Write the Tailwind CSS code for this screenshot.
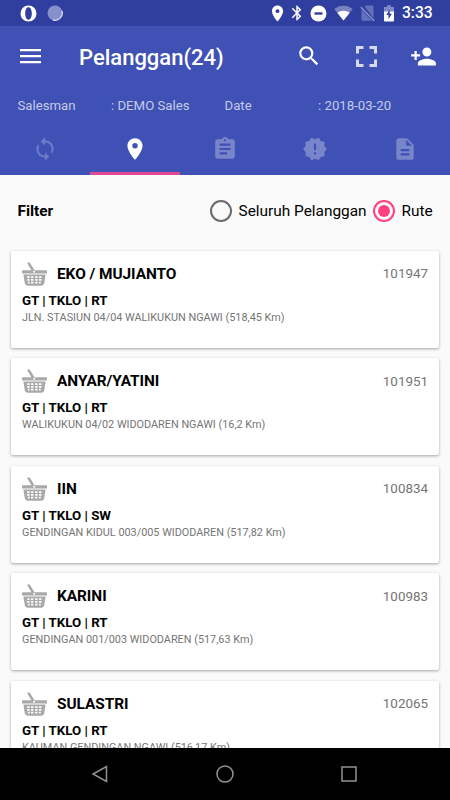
<!DOCTYPE html>
<html lang="id">
<head>
<meta charset="utf-8">
<title>Pelanggan</title>
<script src="https://cdn.jsdelivr.net/npm/@tailwindcss/browser@4"></script>
</head>
<body class="w-[450px] h-[800px] overflow-hidden flex flex-col bg-[#fafafa] font-[Roboto,sans-serif] text-black whitespace-nowrap">
<svg class="hidden">
  <symbol id="pin" viewBox="0 0 24 24"><path d="M12 2C8.13 2 5 5.13 5 9c0 5.25 7 13 7 13s7-7.75 7-13c0-3.87-3.13-7-7-7zm0 9.5a2.5 2.5 0 0 1 0-5 2.5 2.5 0 0 1 0 5z"/></symbol>
  <symbol id="basket" viewBox="0 0 72 69">
    <path d="M15 3q4-4 8 0l13 21h34q2 0 2 2v7H0v-7q0-2 2-2h25z"/>
    <path d="M4 36h64l-4 25q-1 7-8 7H16q-7 0-8-7z"/>
    <circle cx="35" cy="28" r="3" fill="#fff"/>
    <path fill="#fff" d="M15 41h7v5h-7zM26 41h7v5h-7zM38 41h7v5h-7zM49 41h7v5h-7zM15 49h7v5h-7zM26 49h7v5h-7zM38 49h7v5h-7zM49 49h7v5h-7zM17 57h5v5h-5zM26 57h7v5h-7zM38 57h7v5h-7zM49 57h5v5h-5z"/>
  </symbol>
</svg>

<div class="h-[26px] shrink-0 bg-[#303f9f] flex items-center justify-between text-white">
  <div class="flex items-center gap-[10px] pl-[20px]">
    <svg class="w-[17px] h-[17px]" viewBox="0 0 17 17"><path fill="currentColor" fill-rule="evenodd" d="M8.500.5a8 8 0 1 1 0 16 8 8 0 0 1 0-16zm0 1.800c-2 0-3.300 2.600-3.300 6.200s1.300 6.200 3.300 6.200 3.300-2.600 3.300-6.200-1.300-6.200-3.300-6.200z"/></svg>
    <svg class="w-[16px] h-[16px]" viewBox="0 0 16 16"><circle cx="8" cy="8" r="7.500" fill="#8790cb"/><path d="M15 6a7.300 7.300 0 0 1-9 9" fill="none" stroke="#d8dcf2" stroke-width="1.300"/></svg>
  </div>
  <div class="flex items-center pr-[17px]">
    <svg class="w-[19px] h-[19px] mr-[1px]" fill="currentColor"><use href="#pin"/></svg>
    <svg class="w-[18px] h-[18px] mr-[4px]" viewBox="0 0 24 24" fill="currentColor"><path d="M17.710 7.710 12 2h-1v7.590L6.410 5 5 6.410 10.590 12 5 17.590 6.410 19 11 14.410V22h1l5.710-5.710-4.300-4.290 4.300-4.290zM13 5.830l1.880 1.880L13 9.590V5.830zm1.880 10.460L13 18.170v-3.760l1.880 1.880z"/></svg>
    <svg class="w-[17px] h-[17px] mr-[7px]" viewBox="0 0 17 17"><circle cx="8.500" cy="8.500" r="8" fill="currentColor"/><path d="M4.500 7.300h8v2.400h-8z" fill="#303f9f"/></svg>
    <svg class="w-[19px] h-[16px] mr-[7px]" viewBox="0 0 19 16" fill="currentColor"><path d="M9.500 15.500.3 4C5.500-.5 13.500-.5 18.700 4z" opacity=".35"/><path d="M9.500 15.500 3.300 7.700c3.600-2.700 8.800-2.700 12.400 0z"/></svg>
    <svg class="w-[15px] h-[17px] mr-[9px]" viewBox="0 0 15 17" fill="#7781c3"><path d="M4.700 1.500 6.300.5h6.200q1 0 1 1v11.800zM1.500 4.500 12 15.800H3q-1.500 0-1.500-1.500z" opacity=".75"/><path d="M.8 2 14.300 16" stroke="#8992cc" stroke-width="1.400"/></svg>
    <svg class="w-[10px] h-[17px] mr-[8px]" viewBox="0 0 10 17"><path d="M0 2h3V.3h4V2h3v5H0z" fill="#7e88c6"/><path d="M0 6.500h10v9q0 1-1 1H1q-1 0-1-1z" fill="#fff"/><path d="M5.700 4.500 2.300 10h2.200v4.200L7.900 8.700H5.700z" fill="#303f9f"/></svg>
    <span class="text-[15.600px] font-medium leading-none w-[31px] pt-[2px]">3:33</span>
  </div>
</div>

<header class="h-[149px] shrink-0 bg-[#3f51b5] text-white flex flex-col">
  <div class="h-[60px] flex items-center">
    <svg class="w-[21px] h-[16px] ml-[20px] mr-[38px]" viewBox="0 0 21 16" fill="currentColor"><path d="M0 1h21v2.200H0zM0 7h21v2.200H0zM0 13h21v2.200H0z"/></svg>
    <h1 class="text-[22px] font-medium w-[217px] pt-[4px] leading-[26px]">Pelanggan(24)</h1>
    <svg class="w-[26px] h-[26px]" viewBox="0 0 24 24" fill="currentColor"><path d="M15.500 14h-.79l-.28-.27A6.471 6.471 0 0 0 16 9.500 6.500 6.500 0 1 0 9.500 16c1.610 0 3.090-.59 4.230-1.570l.27.28v.79l5 4.990L20.490 19l-4.990-5zm-6 0C7.010 14 5 11.990 5 9.500S7.010 5 9.500 5 14 7.010 14 9.500 11.990 14 9.500 14z"/></svg>
    <svg class="w-[21px] h-[21px] ml-[34px]" viewBox="0 0 21 21" fill="none" stroke="#d5d9f0" stroke-width="3"><path d="M1.500 7.500v-6h6M13.500 1.500h6v6M19.500 13.500v6h-6M7.500 19.500h-6v-6"/></svg>
    <svg class="w-[27px] h-[27px] ml-[33px]" viewBox="0 0 24 24" fill="currentColor"><path d="M15 12c2.210 0 4-1.790 4-4s-1.790-4-4-4-4 1.790-4 4 1.790 4 4 4zm-9-2V7H4v3H1v2h3v3h2v-3h3v-2H6zm9 4c-2.670 0-8 1.340-8 4v2h16v-2c0-2.660-5.330-4-8-4z"/></svg>
  </div>
  <div class="h-[38px] pl-[17.500px] flex items-center text-[13.200px] text-[#c5cbe9] pt-[2px]">
    <span class="w-[93.500px]">Salesman</span><span class="w-[113.500px]">: DEMO Sales</span><span class="w-[93.500px]">Date</span><span>: 2018-03-20</span>
  </div>
  <nav class="h-[51px] grid grid-cols-5 text-[#7985cb]">
    <div class="flex justify-center items-center pb-[2px]"><svg class="w-[26px] h-[26px]" viewBox="0 0 24 24" fill="#6c7ac7"><path d="M12 4V1L8 5l4 4V6c3.310 0 6 2.690 6 6 0 1.010-.25 1.970-.7 2.800l1.460 1.460A7.930 7.930 0 0 0 20 12c0-4.420-3.580-8-8-8zm0 14c-3.310 0-6-2.690-6-6 0-1.010.25-1.970.7-2.800L5.240 7.740A7.930 7.930 0 0 0 4 12c0 4.420 3.580 8 8 8v3l4-4-4-4v3z"/></svg></div>
    <div class="flex justify-center items-center border-b-[3px] border-[#e0488f] pt-[1px]"><svg class="w-[26px] h-[26px]" fill="#fff"><use href="#pin"/></svg></div>
    <div class="flex justify-center items-center pb-[1px]"><svg class="w-[26px] h-[26px]" viewBox="0 0 24 24" fill="currentColor"><path d="M19 3h-4.180C14.400 1.840 13.300 1 12 1c-1.300 0-2.400.84-2.820 2H5c-1.100 0-2 .9-2 2v14c0 1.100.9 2 2 2h14c1.100 0 2-.9 2-2V5c0-1.100-.9-2-2-2zm-7 0c.55 0 1 .45 1 1s-.45 1-1 1-1-.45-1-1 .45-1 1-1zm2 14H7v-2h7v2zm3-4H7v-2h10v2zm0-4H7V7h10v2z"/></svg></div>
    <div class="flex justify-center items-center pb-[2px]"><svg class="w-[26px] h-[26px]" viewBox="0 0 24 24" fill="currentColor"><path d="M23 12l-2.440-2.780.34-3.680-3.610-.82-1.890-3.180L12 3 8.600 1.540 6.710 4.720l-3.610.81.34 3.680L1 12l2.440 2.780-.34 3.690 3.610.82 1.890 3.180L12 21l3.400 1.460 1.890-3.180 3.610-.82-.34-3.680L23 12zm-10 5h-2v-2h2v2zm0-4h-2V7h2v6z"/></svg></div>
    <div class="flex justify-center items-center pb-[2px]"><svg class="w-[26px] h-[26px]" viewBox="0 0 24 24" fill="currentColor"><path d="M14 2H6c-1.100 0-1.990.9-1.990 2L4 20c0 1.100.89 2 1.990 2H18c1.100 0 2-.9 2-2V8l-6-6zm2 16H8v-2h8v2zm0-4H8v-2h8v2zm-3-5V3.500L18.500 9H13z"/></svg></div>
  </nav>
</header>

<main class="h-[573px] shrink-0 overflow-hidden">
  <div class="h-[75.500px] pl-[17.500px] pr-[17px] flex items-center text-[15.400px] pb-[4px]">
    <span class="font-bold text-[15.400px] w-[192px] pt-[1px]">Filter</span>
    <span class="w-[22px] h-[22px] rounded-full border-2 border-[#6b6b6b] shrink-0"></span>
    <span class="w-[141px] pl-[7px] pt-[1px] shrink-0">Seluruh Pelanggan</span>
    <span class="w-[22px] h-[22px] rounded-full border-2 border-[#ff4081] shrink-0 flex items-center justify-center"><span class="w-[12px] h-[12px] rounded-full bg-[#ff4081]"></span></span>
    <span class="pl-[7px] pt-[1px]">Rute</span>
  </div>
  <div id="list" class="flex flex-col gap-[10.500px] px-[11px]"></div>
</main>

<footer class="h-[52px] shrink-0 bg-black flex items-center justify-center gap-[107px] pr-[2px]">
  <svg class="w-[18px] h-[18px]" viewBox="0 0 18 18" fill="none" stroke="#929292" stroke-width="1.500"><path d="M15.500 1.500v15L2 9z"/></svg>
  <svg class="w-[18px] h-[18px]" viewBox="0 0 18 18" fill="none" stroke="#929292" stroke-width="1.500"><circle cx="9" cy="9" r="8"/></svg>
  <svg class="w-[16px] h-[16px]" viewBox="0 0 16 16" fill="none" stroke="#929292" stroke-width="1.500"><path d="M1 1h14v14H1z"/></svg>
</footer>

<script>
const customers = [
  ['EKO / MUJIANTO', '101947', 'GT | TKLO | RT', 'JLN. STASIUN 04/04 WALIKUKUN NGAWI (518,45 Km)'],
  ['ANYAR/YATINI', '101951', 'GT | TKLO | RT', 'WALIKUKUN 04/02 WIDODAREN NGAWI (16,2 Km)'],
  ['IIN', '100834', 'GT | TKLO | SW', 'GENDINGAN KIDUL 003/005 WIDODAREN (517,82 Km)'],
  ['KARINI', '100983', 'GT | TKLO | RT', 'GENDINGAN 001/003 WIDODAREN (517,63 Km)'],
  ['SULASTRI', '102065', 'GT | TKLO | RT', 'KAUMAN GENDINGAN NGAWI (516,17 Km)']
];
document.getElementById('list').innerHTML = customers.map(([name, id, type, address]) => `
  <article class="h-[97px] shrink-0 bg-white rounded-[2px] shadow-[0_1px_3px_rgba(0,0,0,0.35)] px-[11px] pt-[10px]">
    <div class="flex items-center h-[26px]">
      <svg class="w-[25px] h-[24px] mr-[10px]" fill="#a9a9a9"><use href="#basket"/></svg>
      <span class="text-[15.400px] font-bold tracking-[-0.04px] grow pt-[2px]">${name}</span>
      <span class="text-[13.400px] text-[#757575] pt-[2px]">${id}</span>
    </div>
    <div class="text-[13.300px] font-bold leading-[16px] mt-[6px]">${type}</div>
    <div class="text-[10.850px] text-[#757575] leading-[14px] mt-[2px]">${address}</div>
  </article>`).join('');
</script>
</body>
</html>
